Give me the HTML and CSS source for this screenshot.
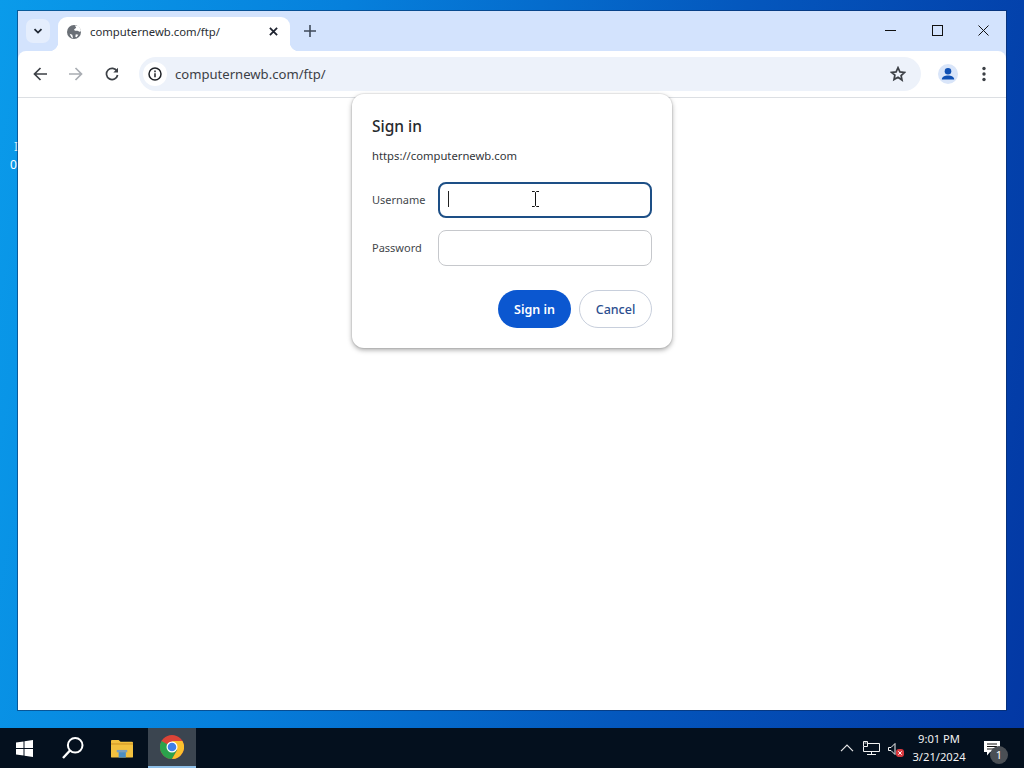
FILE: index.html
```html
<!DOCTYPE html>
<html lang="en">
<head>
<meta charset="utf-8">
<title>computernewb.com/ftp/</title>
<link rel="stylesheet" href="styles.css">
</head>
<body>
<main class="desktop">
  <span class="desk-mark">I</span>
  <span class="desk-zero">0</span>
  <section class="window">
    <header class="tabstrip">
      <button class="tabsearch"><svg width="12" height="12" viewBox="0 0 12 12"><path d="M2.5 4.2 6 7.6l3.5-3.4" fill="none" stroke="#1f2733" stroke-width="1.8"/></svg></button>
      <div class="tab">
        <svg class="favicon" width="14" height="14" viewBox="0 0 16 16"><circle cx="8" cy="8" r="8" fill="#6a6f76"/><path d="M9 .5l1.500 2.500-2.500 2 1 1.500 3 0 3 1.500 1-2-2.500-4.500zM3 10l3 1 1 4-2-1zM10 10.500l3 .5-2 3-1.500-.5z" fill="#fff"/></svg>
        <span class="tab-title">computernewb.com/ftp/</span>
        <svg class="tab-close" width="9" height="9" viewBox="0 0 10 10"><path d="M1 1l8 8M9 1l-8 8" stroke="#1f2430" stroke-width="2"/></svg>
      </div>
      <svg class="newtab" width="12" height="12" viewBox="0 0 12 12"><path d="M6 0v12M0 6h12" stroke="#3f4a5a" stroke-width="1.600"/></svg>
      <div class="caption">
        <svg width="11" height="11" viewBox="0 0 11 11"><path d="M0 5.500h11" stroke="#111" stroke-width="1"/></svg>
        <svg width="11" height="11" viewBox="0 0 11 11"><rect x=".5" y=".5" width="10" height="10" fill="none" stroke="#111"/></svg>
        <svg width="11" height="11" viewBox="0 0 11 11"><path d="M.5.500l10 10M10.500.5l-10 10" stroke="#111" stroke-width="1"/></svg>
      </div>
    </header>
    <nav class="toolbar">
      <svg class="nav-icon" width="14" height="14" viewBox="0 0 14 14"><path d="M14 7H1.500M7.500 1 1.500 7l6 6" fill="none" stroke="#3c4046" stroke-width="1.700"/></svg>
      <svg class="nav-icon" width="14" height="14" viewBox="0 0 14 14"><path d="M0 7h12.500M6.500 1l6 6-6 6" fill="none" stroke="#a9adb3" stroke-width="1.700"/></svg>
      <svg class="nav-icon" width="14" height="14" viewBox="0 0 14 14"><path d="M12 4.200A5.600 5.600 0 1 0 12.600 8" fill="none" stroke="#3c4046" stroke-width="1.700"/><path d="M13 .8v4.700H8.300z" fill="#3c4046"/></svg>
      <div class="omnibox">
        <span class="info"><svg width="14" height="14" viewBox="0 0 14 14"><circle cx="7" cy="7" r="6" fill="none" stroke="#1f2227" stroke-width="1.500"/><path d="M7 6.200v4M7 3.600v1.600" stroke="#1f2227" stroke-width="1.500"/></svg></span>
        <span class="url">computernewb.com/ftp/</span>
        <svg class="star" width="16" height="16" viewBox="0 0 16 16"><path d="M8 1.700l1.900 4.200 4.600.5-3.400 3.100.9 4.500L8 11.200l-4 2.300.9-4.500L1.500 6.400l4.600-.5z" fill="none" stroke="#3c4046" stroke-width="1.700"/></svg>
      </div>
      <span class="avatar"><svg width="20" height="20" viewBox="0 0 20 20"><circle cx="10" cy="10" r="10" fill="#d9e5f9"/><circle cx="10" cy="7.300" r="3.300" fill="#0f50b4"/><path d="M3.800 15.500c0-2.700 3-4 6.200-4s6.200 1.300 6.200 4z" fill="#0f50b4"/></svg></span>
      <svg class="menu" width="4" height="16" viewBox="0 0 4 16"><circle cx="2" cy="2.500" r="1.700" fill="#3c4046"/><circle cx="2" cy="8" r="1.700" fill="#3c4046"/><circle cx="2" cy="13.500" r="1.700" fill="#3c4046"/></svg>
    </nav>
    <div class="page"></div>
    <form class="dialog">
      <h1 class="dlg-title">Sign in</h1>
      <p class="dlg-origin">https://computernewb.com</p>
      <div class="field">
        <label class="field-label">Username</label>
        <div class="input input-focus"><span class="caret"></span>
          <svg class="ibeam" width="9" height="16" viewBox="0 0 9 16"><path d="M1 .5h2.500L4.500 1.500 5.500.5H8M4.500 1.500v13M1 15.500h2.500l1-1 1 1H8" fill="none" stroke="#111" stroke-width="1"/></svg>
        </div>
      </div>
      <div class="field field-second">
        <label class="field-label">Password</label>
        <div class="input"></div>
      </div>
      <div class="actions">
        <button type="button" class="btn btn-primary">Sign in</button>
        <button type="button" class="btn btn-ghost">Cancel</button>
      </div>
    </form>
  </section>
</main>
<footer class="taskbar">
  <span class="tb-start"><svg width="17" height="17" viewBox="0 0 17 17"><path d="M0 2.500 7.500 1.400v6.500H0zM8.500 1.300 17 0v7.900H8.500zM0 9h7.500v6.500L0 14.500zM8.500 9H17v8l-8.500-1.200z" fill="#fff"/></svg></span>
  <span class="tb-item"><svg width="24" height="24" viewBox="0 0 24 24"><circle cx="14.200" cy="9.300" r="7.300" fill="none" stroke="#fff" stroke-width="2"/><path d="M9 14.500 2 22" stroke="#fff" stroke-width="2.400"/></svg></span>
  <span class="tb-item"><svg width="22" height="19" viewBox="0 0 23 19"><path d="M0 1.500q0-1 1-1h7l2 2h12q1 0 1 1V18q0 1-1 1H1q-1 0-1-1z" fill="#f3c13f"/><path d="M0 4h23v1.500H0z" fill="#d9a02c"/><path d="M8 12h7.500v7H8z" fill="#4d8fc4"/><path d="M6 11h11v2.500H6z" fill="#7a9fbe"/></svg></span>
  <span class="tb-item tb-active"><svg width="24" height="24" viewBox="0 0 24 24"><circle cx="12" cy="12" r="12" fill="#db4437"/><path d="M12 12 1.600 6A12 12 0 0 0 12 24l5.200-9z" fill="#2ba24c"/><path d="M12 6h10.400A12 12 0 0 1 12 24l5.200-9z" fill="#fbc02d"/><circle cx="12" cy="12" r="5.500" fill="#fff"/><circle cx="12" cy="12" r="4.300" fill="#3f7fe8"/></svg></span>
  <div class="tray">
    <svg width="14" height="8" viewBox="0 0 14 8"><path d="M1 7.200 7 1.200l6 6" fill="none" stroke="#e8e8e8" stroke-width="1.200"/></svg>
    <svg class="tray-net" width="17" height="14" viewBox="0 0 17 14"><path d="M4.500 2.500H16.500V10.500H.5V6M4 13.500h9M8.500 10.500v3M.5.500h4v5h-4zM1.500 2h2" fill="none" stroke="#f2f2f2" stroke-width="1"/></svg>
    <svg class="tray-vol" width="17" height="16" viewBox="0 0 17 16"><path d="M.5 5.500h2.500l4-4v11l-4-4H.500z" fill="none" stroke="#f2f2f2"/><rect x="8" y="7" width="8" height="8" rx="3" fill="#d9393f"/><path d="M10.300 9.300l3.400 3.400M13.700 9.300l-3.400 3.400" stroke="#fff"/></svg>
    <div class="clock"><span>9:01 PM</span><span>3/21/2024</span></div>
    <span class="notif"><svg width="16" height="15" viewBox="0 0 16 15"><path d="M0 0h16v11H6l-3 3.500V11H0z" fill="#fff"/><path d="M3 3h10M3 5.500h10M3 8h7" stroke="#111"/></svg><span class="notif-badge">1</span></span>
  </div>
</footer>
</body>
</html>
```
FILE: styles.css
```css
* { box-sizing: border-box; }
html, body { margin: 0; height: 100%; }
body {
  width: 1024px; height: 768px; overflow: hidden;
  display: flex; flex-direction: column;
  font-family: "Noto Sans", "Open Sans", sans-serif;
  background: #000;
}
button { font: inherit; border: 0; padding: 0; }
.desktop {
  position: relative; flex: 1; min-height: 0;
  padding: 11px 18px 18px;
  background: linear-gradient(100deg, #0a9bea 0%, #0680dc 30%, #0457bd 65%, #0338a4 100%);
  display: flex;
}
.desk-mark, .desk-zero { position: absolute; color: #fff; font-size: 12px; line-height: 14px; }
.desk-mark { left: 14px; top: 140px; color: #cfe6f7; }
.desk-zero { left: 10px; top: 158px; }
.window {
  position: relative; flex: 1; display: flex; flex-direction: column;
  background: #d3e3fd; box-shadow: 0 0 0 1px rgba(10,40,90,.55);
}
.tabstrip {
  height: 40px; display: flex; align-items: flex-end; padding: 0 0 0 8px; flex: none;
}
.tabsearch {
  width: 24px; height: 24px; margin-bottom: 8px; border-radius: 7px; background: #e5eefd;
  display: flex; align-items: center; justify-content: center;
}
.tab {
  position: relative; width: 232px; height: 34px; margin-left: 8px; background: #fff;
  border-radius: 9px 9px 0 0; display: flex; align-items: center; padding: 0 12px 5px 9px;
}
.tab::before, .tab::after {
  content: ""; position: absolute; bottom: 0; width: 9px; height: 9px;
}
.tab::before { left: -9px; background: radial-gradient(circle at 0 0, transparent 9px, #fff 9.500px); }
.tab::after { right: -9px; background: radial-gradient(circle at 100% 0, transparent 9px, #fff 9.500px); }
.favicon { flex: none; }
.tab-title { margin-left: 9px; font-size: 11.300px; color: #2a2e33; flex: 1; white-space: nowrap; }
.tab-close { flex: none; }
.newtab { margin: 0 0 14px 14px; }
.caption {
  margin-left: auto; width: 121px; height: 40px; display: flex; align-items: center; justify-content: space-between; padding: 0 17px 2px 0;
}
.toolbar {
  height: 47px; flex: none; display: flex; align-items: center; background: #fff;
  border-bottom: 1px solid #dcdfe3; padding: 0 0 0 15px; border-radius: 8px 8px 0 0;
}
.nav-icon { margin-right: 22px; flex: none; }
.omnibox {
  height: 34px; width: 782px; margin-left: -2px; background: #edf2fa; border-radius: 17px;
  display: flex; align-items: center; padding: 0 15px 0 4px;
}
.info {
  width: 24px; height: 24px; border-radius: 50%; background: #fff;
  display: flex; align-items: center; justify-content: center; flex: none;
}
.url { margin-left: 8px; font-size: 13.100px; color: #3c4046; flex: 1; white-space: nowrap; }
.avatar { margin-left: 17px; width: 20px; height: 20px; display: block; flex: none; }
.avatar svg { display: block; }
.menu { margin-left: 24px; flex: none; }
.page { flex: 1; background: #fff; }
.dialog {
  position: absolute; left: 334px; top: 83px; width: 320px; height: 254px;
  background: #fff; border-radius: 12px; padding: 22px 20px 0;
  box-shadow: 0 0 0 1px rgba(0,0,0,.05), 0 2px 5px rgba(0,0,0,.35);
}
.dlg-title { margin: 0; font-size: 15.500px; font-weight: 500; line-height: 20px; color: #27292d; }
.dlg-origin { margin: 10px 0 0; font-size: 11.250px; line-height: 20px; color: #33363a; }
.field { display: flex; align-items: center; margin-top: 16px; }
.field-second { margin-top: 12px; }
.field-label { width: 66px; font-size: 11px; line-height: 16px; padding-bottom: 1px; color: #44474c; flex: none; }
.input {
  position: relative; width: 214px; height: 36px; border: 1px solid #c6c8cc; border-radius: 8px;
}
.input-focus { border: 2px solid #1d4f86; }
.caret { position: absolute; left: 8px; top: 7px; width: 1px; height: 16px; background: #222; }
.ibeam { position: absolute; left: 91px; top: 7px; }
.actions { display: flex; justify-content: flex-end; gap: 8px; margin-top: 24px; }
.btn { height: 38px; border-radius: 19px; font-size: 12.500px; font-weight: 600; }
.btn-primary { width: 73px; background: #0b57d0; color: #fff; }
.btn-ghost { width: 73px; background: #fff; color: #2c4f8f; border: 1px solid #c8cfdc; font-weight: 500; }
.taskbar {
  height: 40px; flex: none; background: #04101e; display: flex; align-items: stretch; color: #fff;
}
.tb-start { width: 48px; display: flex; align-items: center; justify-content: center; }
.tb-item { width: 49px; display: flex; align-items: center; justify-content: center; }
.tb-active { background: #3b4550; border-bottom: 2px solid #8ebfe8; margin-left: 2px; width: 48px; }
.tray { margin-left: auto; display: flex; align-items: center; padding-right: 3px; }
.tray-net { margin-left: 9px; }
.tray-vol { margin-left: 8px; margin-top: 3px; }
.clock {
  display: flex; flex-direction: column; align-items: center; width: 68px; font-size: 11.200px; line-height: 18px; color: #f2f2f2;
}
.notif { position: relative; width: 40px; height: 40px; margin-left: 8px; display: flex; align-items: center; padding-left: 3px; }
.notif-badge {
  position: absolute; left: 9px; top: 18px; width: 18px; height: 18px; border-radius: 50%;
  background: #4a4f55; color: #fff; font-size: 11px; line-height: 18px; text-align: center;
}
```
